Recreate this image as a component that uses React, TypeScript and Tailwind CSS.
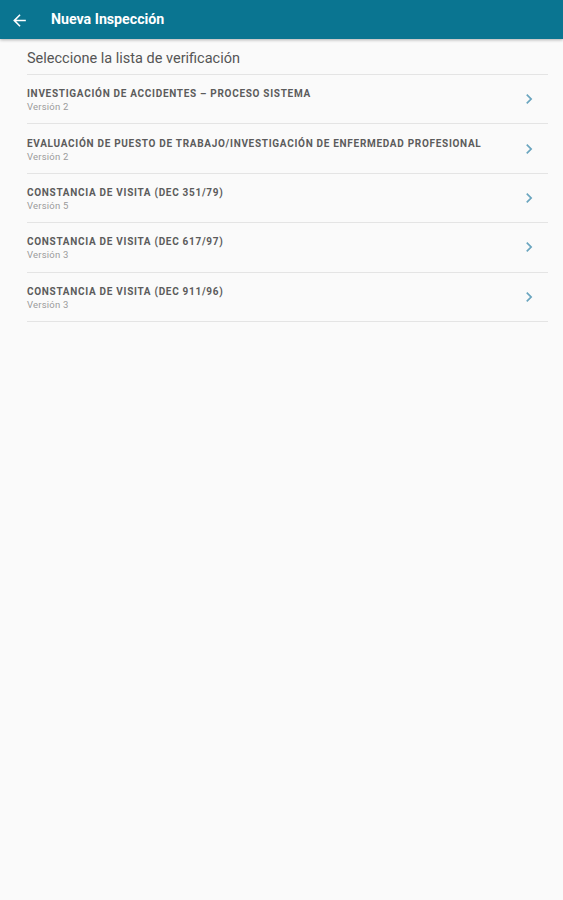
import { MdArrowBack, MdChevronRight } from "react-icons/md";

const checklists = [
  { title: "INVESTIGACIÓN DE ACCIDENTES – PROCESO SISTEMA", version: "Versión 2" },
  { title: "EVALUACIÓN DE PUESTO DE TRABAJO/INVESTIGACIÓN DE ENFERMEDAD PROFESIONAL", version: "Versión 2" },
  { title: "CONSTANCIA DE VISITA (DEC 351/79)", version: "Versión 5" },
  { title: "CONSTANCIA DE VISITA (DEC 617/97)", version: "Versión 3" },
  { title: "CONSTANCIA DE VISITA (DEC 911/96)", version: "Versión 3" },
];

const App = () => {
  return (
    <div className="min-h-[900px] bg-[#fafafa] font-['Roboto',sans-serif]">
      {/* Toolbar */}
      <header className="h-[39px] bg-[#0a7591] flex items-center shadow-[0_1px_3px_rgba(0,0,0,0.3)]">
        <div className="w-[51px] flex items-center pl-[10px] pt-[1px]">
          <MdArrowBack className="w-[19px] h-[19px] text-white" />
        </div>
        <h1 className="text-white text-[14.2px] font-bold pt-[1px]">Nueva Inspección</h1>
      </header>

      <div className="px-[27px] pr-[15px]">
        <div className="h-[36px] flex items-end pb-[4px] border-b border-[#e4e4e4]">
          <span className="text-[14.5px] text-[#555]">Seleccione la lista de verificación</span>
        </div>

        {checklists.map((item, i) => (
          <div key={i} className="h-[49.4px] flex items-center border-b border-[#e4e4e4]">
            <div className="flex-1 flex flex-col pt-[2px]">
              <span className="text-[10px] font-bold text-[#5c5c5c] tracking-[0.7px] leading-[14px]">
                {item.title}
              </span>
              <span className="text-[9.5px] text-[#9a9a9a] tracking-[0.2px] leading-[12px]">{item.version}</span>
            </div>
            <MdChevronRight className="w-[20px] h-[20px] text-[#6aa5bf] mr-[9px]" />
          </div>
        ))}
      </div>
    </div>
  );
};

export default App;
